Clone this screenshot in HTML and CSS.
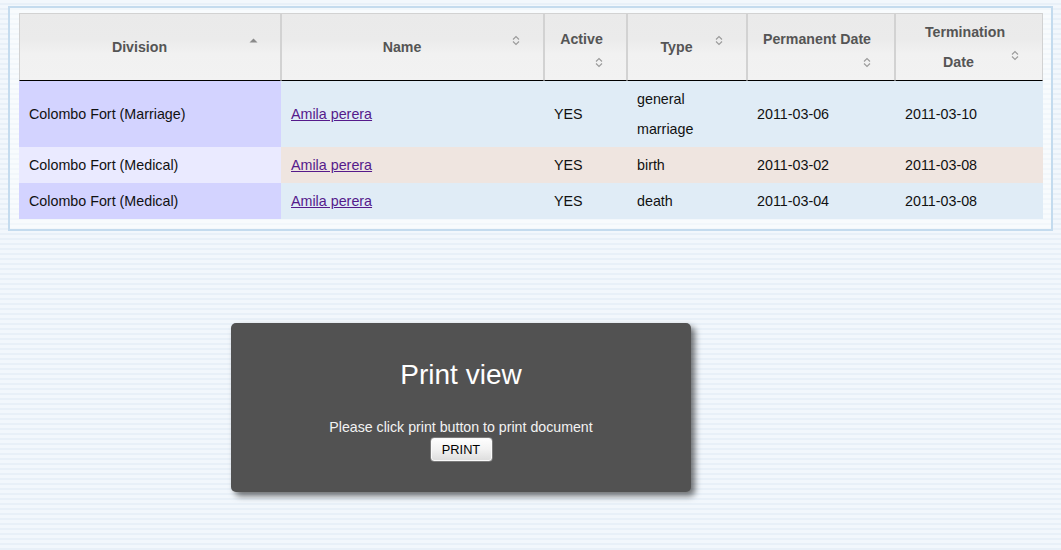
FILE: index.html
```html
<!DOCTYPE html>
<html>
<head>
<meta charset="utf-8">
<title>Print view</title>
<link rel="stylesheet" href="styles.css">
</head>
<body>
<div class="panel">
  <table class="grid">
    <colgroup>
      <col class="c-div"><col class="c-name"><col class="c-act"><col class="c-type"><col class="c-perm"><col class="c-term">
    </colgroup>
    <thead>
      <tr>
        <th><div class="th-in"><span class="th-txt">Division</span><svg class="ico ico-asc" width="9" height="5" viewBox="0 0 9 5"><path d="M0.5 4.5 L4.5 0.5 L8.5 4.5 Z" fill="#8a8a8a"/></svg></div></th>
        <th><div class="th-in"><span class="th-txt">Name</span><svg class="ico ico-both" width="8" height="11" viewBox="0 0 8 11"><path d="M1 4.5 L4 1.5 L7 4.5 M1 6.5 L4 9.5 L7 6.5" fill="none" stroke="#9a9a9a" stroke-width="1.1"/></svg></div></th>
        <th><div class="th-in wrap"><span class="th-txt">Active</span><svg class="ico" width="8" height="11" viewBox="0 0 8 11"><path d="M1 4.5 L4 1.5 L7 4.5 M1 6.5 L4 9.5 L7 6.5" fill="none" stroke="#9a9a9a" stroke-width="1.1"/></svg></div></th>
        <th><div class="th-in"><span class="th-txt">Type</span><svg class="ico ico-both" width="8" height="11" viewBox="0 0 8 11"><path d="M1 4.5 L4 1.5 L7 4.5 M1 6.5 L4 9.5 L7 6.5" fill="none" stroke="#9a9a9a" stroke-width="1.1"/></svg></div></th>
        <th><div class="th-in wrap"><span class="th-txt">Permanent Date</span><svg class="ico" width="8" height="11" viewBox="0 0 8 11"><path d="M1 4.5 L4 1.5 L7 4.5 M1 6.5 L4 9.5 L7 6.5" fill="none" stroke="#9a9a9a" stroke-width="1.1"/></svg></div></th>
        <th><div class="th-in two"><span class="th-txt l1">Termination</span><span class="th-txt l2">Date</span><svg class="ico ico-two" width="8" height="11" viewBox="0 0 8 11"><path d="M1 4.5 L4 1.5 L7 4.5 M1 6.5 L4 9.5 L7 6.5" fill="none" stroke="#9a9a9a" stroke-width="1.1"/></svg></div></th>
      </tr>
    </thead>
    <tbody>
      <tr class="odd">
        <td class="sorted">Colombo Fort (Marriage)</td>
        <td><a href="#" class="lnk">Amila perera</a></td>
        <td>YES</td>
        <td><div>general</div><div>marriage</div></td>
        <td>2011-03-06</td>
        <td>2011-03-10</td>
      </tr>
      <tr class="even">
        <td class="sorted">Colombo Fort (Medical)</td>
        <td><a href="#" class="lnk">Amila perera</a></td>
        <td>YES</td>
        <td>birth</td>
        <td>2011-03-02</td>
        <td>2011-03-08</td>
      </tr>
      <tr class="odd">
        <td class="sorted">Colombo Fort (Medical)</td>
        <td><a href="#" class="lnk">Amila perera</a></td>
        <td>YES</td>
        <td>death</td>
        <td>2011-03-04</td>
        <td>2011-03-08</td>
      </tr>
    </tbody>
  </table>
</div>

<div class="dialog">
  <h1 class="dlg-title">Print view</h1>
  <p class="dlg-text">Please click print button to print document</p>
  <button class="dlg-btn" type="button">PRINT</button>
</div>
</body>
</html>
```
FILE: styles.css
```css
html, body {
  height: 100%;
}
body {
  margin: 6px 8px;
  font-family: "Liberation Sans", Arial, sans-serif;
  font-size: 14px;
  color: #111;
  background: repeating-linear-gradient(to bottom, #f2f7fc 0px, #f2f7fc 3px, #e8f0f8 3px, #e8f0f8 5px);
}
.panel {
  border: 2px solid #c4dbee;
  padding: 5px 8px 10px 9px;
  background: rgba(255, 255, 255, 0.45);
}
.grid {
  width: 100%;
  border-collapse: separate;
  border-spacing: 0;
  table-layout: fixed;
}
.c-div { width: 262px; }
.c-name { width: 263px; }
.c-act { width: 83px; }
.c-type { width: 120px; }
.c-perm { width: 148px; }
.c-term { width: 148px; }

.grid th {
  padding: 3px 18px 3px 10px;
  border: 1px solid #d2d2d2;
  border-bottom: 1px solid #000;
  background: linear-gradient(to bottom, #eaeaea 0%, #ebebeb 38%, #f1f1f1 60%, #f2f2f2 100%);
  color: #555;
  font-weight: bold;
  font-size: 14.2px;
  line-height: 30px;
  vertical-align: middle;
}
.th-in {
  display: grid;
  grid-template-columns: 1fr 13px;
  min-height: 60px;
  align-items: center;
}
.th-txt {
  text-align: center;
}
.ico {
  display: block;
  align-self: start;
}
.ico-asc { margin-top: 21px; }
.ico-both { margin-top: 18px; }
.th-in.wrap {
  grid-template-rows: 30px 16px;
  align-content: center;
}
.th-in.wrap .th-txt {
  grid-column: 1 / -1;
  grid-row: 1;
}
.th-in.wrap .ico {
  grid-column: 2;
  grid-row: 2;
  align-self: center;
}
.th-in.two {
  grid-template-rows: 30px 30px;
}
.th-in.two .l1 {
  grid-column: 1 / -1;
  grid-row: 1;
}
.th-in.two .l2 {
  grid-column: 1;
  grid-row: 2;
}
.th-in.two .ico-two {
  grid-column: 2;
  grid-row: 2;
  align-self: start;
  margin-top: 3px;
}

.grid td {
  padding: 3px 10px;
  font-size: 14.3px;
  line-height: 30px;
  vertical-align: middle;
  white-space: nowrap;
}
.odd td { background: #e0ecf6; }
.even td { background: #efe5e0; }
.odd td.sorted { background: #d3d3ff; }
.even td.sorted { background: #eaeaff; }
.lnk {
  color: #551a8b;
  text-decoration: underline;
}

.dialog {
  width: 460px;
  height: 169px;
  box-sizing: border-box;
  margin: 92px 0 0 223px;
  padding: 35px 20px 0;
  background: #525252;
  border-radius: 5px;
  box-shadow: 4px 4px 6px rgba(0, 0, 0, 0.55);
  text-align: center;
  color: #fff;
}
.dlg-title {
  margin: 0;
  font-size: 28px;
  font-weight: normal;
  line-height: 34px;
}
.dlg-text {
  margin: 27px 0 0;
  font-size: 14.2px;
  line-height: 16px;
  color: #f2f2f2;
}
.dlg-btn {
  margin-top: 2px;
  width: 63px;
  height: 25px;
  padding: 0;
  font-family: "Liberation Sans", Arial, sans-serif;
  font-size: 12.8px;
  color: #000;
  border: 1px solid #7a7a7a;
  border-radius: 4px;
  background: linear-gradient(to bottom, #ffffff 0%, #f2f2f2 50%, #dcdcdc 100%);
  box-shadow: inset 0 0 0 1px #fafafa;
}
```
